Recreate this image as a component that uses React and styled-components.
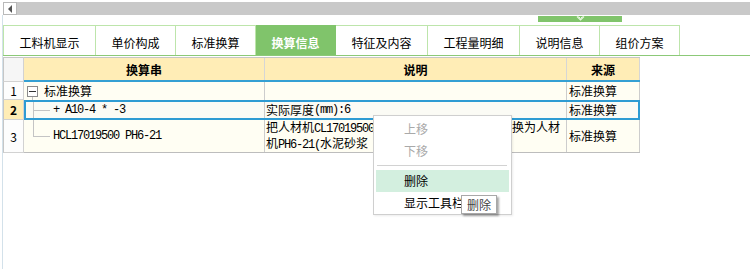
import React from 'react';
import styled, { createGlobalStyle } from 'styled-components';

const GlobalStyle = createGlobalStyle`
  html, body { margin: 0; padding: 0; background: #fff; }
  body {
    font-family: "Noto Sans CJK SC", "Noto Sans", sans-serif;
    font-size: 12px;
    color: #000;
  }
  #root { width: 750px; height: 269px; overflow: hidden; }
`;

const Page = styled.div`
  position: relative;
  width: 750px;
  height: 269px;
  display: flex;
  flex-direction: column;
  overflow: hidden;
`;

const ScrollRow = styled.div`
  display: flex;
  height: 13px;
  margin: 2px 0 0 3px;
`;

const ScrollButton = styled.div`
  width: 14px;
  height: 13px;
  box-sizing: border-box;
  border: 1px solid #b9b9b9;
  background: #fff;
  display: flex;
  align-items: center;
  justify-content: center;
`;

const ScrollTrack = styled.div`
  flex: 1;
  height: 13px;
  background: #c9c9c9;
`;

const Panel = styled.div`
  flex: 1;
  margin-left: 2px;
  border-left: 1px solid #d3e1ea;
  display: flex;
  flex-direction: column;
`;

const HandleRow = styled.div`
  height: 10px;
  padding-top: 1px;
  box-sizing: border-box;
`;

const Handle = styled.div`
  margin-left: 535px;
  width: 84px;
  height: 6px;
  background: #80c46b;
  display: flex;
  justify-content: center;
  align-items: center;
`;

const Tabs = styled.div`
  display: flex;
  height: 31px;
  box-sizing: border-box;
  border-bottom: 1px solid #8cc978;
`;

const Tab = styled.div`
  box-sizing: border-box;
  height: 30px;
  padding: 3px 15.5px 0;
  border: 1px solid #bde5ab;
  border-bottom: none;
  border-left: none;
  display: flex;
  align-items: center;
  font-size: 12px;
  white-space: nowrap;
  color: ${p => (p.$active ? '#fff' : '#000')};
  font-weight: ${p => (p.$active ? 'bold' : 'normal')};
  background: ${p => (p.$active ? '#80c46b' : '#fff')};
  border-color: ${p => (p.$active ? '#80c46b' : '#bde5ab')};
  &:first-child { border-left: 1px solid #bde5ab; }
`;

const Grid = styled.div`
  margin-top: 1px;
  width: 637px;
  display: flex;
  flex-direction: column;
`;

const Row = styled.div`
  display: grid;
  grid-template-columns: 21px 616px;
  height: ${p => p.$h}px;
`;

const NumCell = styled.div`
  box-sizing: border-box;
  border-left: 1px solid #c6c6c6;
  border-right: 1px solid #d2d2d2;
  border-bottom: 1px solid #d2d2d2;
  border-top: ${p => (p.$head ? '1px solid #c6c6c6' : 'none')};
  background: ${p => (p.$head ? '#f6f6f6' : p.$sel ? '#ffedb6' : '#fdfdfd')};
  font-weight: ${p => (p.$sel ? 'bold' : 'normal')};
  display: flex;
  align-items: center;
  justify-content: center;
  font-size: 12px;
`;

const HeadCells = styled.div`
  display: grid;
  grid-template-columns: 241px 302px 73px;
  box-sizing: border-box;
  border-top: 1px solid #c6c6c6;
  border-bottom: 2px solid #35a0d3;
  background: #ffedb6;
`;

const HeadCell = styled.div`
  border-right: 1px solid #d6d6d6;
  display: flex;
  align-items: center;
  justify-content: center;
  font-weight: bold;
  font-size: 12px;
  padding-top: 1px;
`;

const Cells = styled.div`
  position: relative;
  display: grid;
  grid-template-columns: 241px 302px 73px;
  box-sizing: border-box;
  background: ${p => (p.$sel ? '#fbfbf5' : '#fffef3')};
  border-bottom: ${p => (p.$last ? '1px solid #bdbdbd' : 'none')};
  &::after {
    content: '';
    display: ${p => (p.$sel ? 'block' : 'none')};
    position: absolute;
    inset: 0;
    border: 2px solid #2e9bd3;
    pointer-events: none;
  }
`;

const Cell = styled.div`
  box-sizing: border-box;
  border-right: 1px solid #cdcdcd;
  display: flex;
  align-items: center;
  padding-left: ${p => p.$pad ?? 2}px;
  line-height: 14px;
  white-space: nowrap;
`;

const Mono = styled.span`
  font-family: "Liberation Mono", monospace;
  font-size: 12px;
  letter-spacing: -1.2px;
`;

const Toggle = styled.span`
  position: relative;
  flex: none;
  width: 11px;
  height: 11px;
  box-sizing: border-box;
  border: 1px solid #8c8c8c;
  background: #fff;
  margin-right: 6px;
  display: flex;
  align-items: center;
  justify-content: center;
  &::before {
    content: '';
    width: 7px;
    height: 1px;
    background: #333;
  }
  &::after {
    content: '';
    position: absolute;
    left: 4px;
    top: 10px;
    width: 1px;
    height: 5px;
    background: #c4c4c4;
  }
`;

const Connector = styled.span`
  flex: none;
  width: 24px;
  align-self: stretch;
  margin-right: 2px;
  background:
    linear-gradient(#c4c4c4, #c4c4c4) 6px 0 / 1px ${p => (p.$last ? '50%' : '100%')} no-repeat,
    linear-gradient(#c4c4c4, #c4c4c4) 6px 50% / 17px 1px no-repeat;
`;

const Desc = styled.div`
  white-space: nowrap;
`;

const Menu = styled.div`
  position: absolute;
  left: 373px;
  top: 115px;
  width: 139px;
  height: 100px;
  box-sizing: border-box;
  border: 1px solid #cfcfcf;
  background: #fff;
  padding-top: 2px;
  display: flex;
  flex-direction: column;
  box-shadow: 1px 1px 2px rgba(0, 0, 0, 0.08);
`;

const MenuItem = styled.div`
  height: 22px;
  line-height: 22px;
  margin: 0 2px;
  padding-left: 28px;
  font-size: 12px;
  color: ${p => (p.$disabled ? '#a9a9a9' : '#000')};
  background: ${p => (p.$hover ? '#d3efdf' : 'transparent')};
`;

const Separator = styled.div`
  height: 1px;
  margin: 3px 4px 4px 3px;
  background: #d2d2d2;
`;

const Tooltip = styled.div`
  position: absolute;
  left: 461px;
  top: 195px;
  height: 19px;
  box-sizing: border-box;
  padding: 0 5px;
  border: 1px solid #a8a8a8;
  background: #fff;
  color: #444;
  font-size: 12px;
  line-height: 17px;
  box-shadow: 2px 2px 2px rgba(0, 0, 0, 0.35);
`;

const tabs = ['工料机显示', '单价构成', '标准换算', '换算信息', '特征及内容', '工程量明细', '说明信息', '组价方案'];

export default function App() {
  return (
    <>
      <GlobalStyle />
      <Page>
        <ScrollRow>
          <ScrollButton>
            <svg width="5" height="8" viewBox="0 0 5 8">
              <path d="M4 0 L0 4 L4 8 Z" fill="#555" />
            </svg>
          </ScrollButton>
          <ScrollTrack />
        </ScrollRow>
        <Panel>
          <HandleRow>
            <Handle>
              <svg width="9" height="6" viewBox="0 0 9 6">
                <path d="M1 0.5 L4.5 4 L8 0.5" fill="none" stroke="#e8f6e0" strokeWidth="1.2" />
                <path d="M2.5 0.5 L4.5 2.5 L6.5 0.5" fill="none" stroke="#e8f6e0" strokeWidth="1" />
              </svg>
            </Handle>
          </HandleRow>
          <Tabs>
            {tabs.map(t => (
              <Tab key={t} $active={t === '换算信息'}>{t}</Tab>
            ))}
          </Tabs>
          <Grid>
            <Row $h={25}>
              <NumCell $head />
              <HeadCells>
                <HeadCell>换算串</HeadCell>
                <HeadCell>说明</HeadCell>
                <HeadCell>来源</HeadCell>
              </HeadCells>
            </Row>
            <Row $h={18}>
              <NumCell>1</NumCell>
              <Cells>
                <Cell $pad={3}><Toggle />标准换算</Cell>
                <Cell />
                <Cell>标准换算</Cell>
              </Cells>
            </Row>
            <Row $h={20}>
              <NumCell $sel>2</NumCell>
              <Cells $sel>
                <Cell $pad={3}><Connector /><Mono>+ A10-4 * -3</Mono></Cell>
                <Cell $pad={1}>实际厚度<Mono>(mm):6</Mono></Cell>
                <Cell>标准换算</Cell>
              </Cells>
            </Row>
            <Row $h={32}>
              <NumCell>3</NumCell>
              <Cells $last>
                <Cell $pad={3}><Connector $last /><Mono>HCL17019500 PH6-21</Mono></Cell>
                <Cell $pad={1}>
                  <Desc>
                    把人材机<Mono>CL17019500[</Mono>混合水泥石灰砂浆<Mono> M5.0]</Mono>换为人材
                    <br />
                    机<Mono>PH6-21(</Mono>水泥砂浆<Mono> 1:2)</Mono>
                  </Desc>
                </Cell>
                <Cell>标准换算</Cell>
              </Cells>
            </Row>
          </Grid>
        </Panel>
        <Menu>
          <MenuItem $disabled>上移</MenuItem>
          <MenuItem $disabled>下移</MenuItem>
          <Separator />
          <MenuItem $hover>删除</MenuItem>
          <MenuItem>显示工具栏</MenuItem>
        </Menu>
        <Tooltip>删除</Tooltip>
      </Page>
    </>
  );
}
